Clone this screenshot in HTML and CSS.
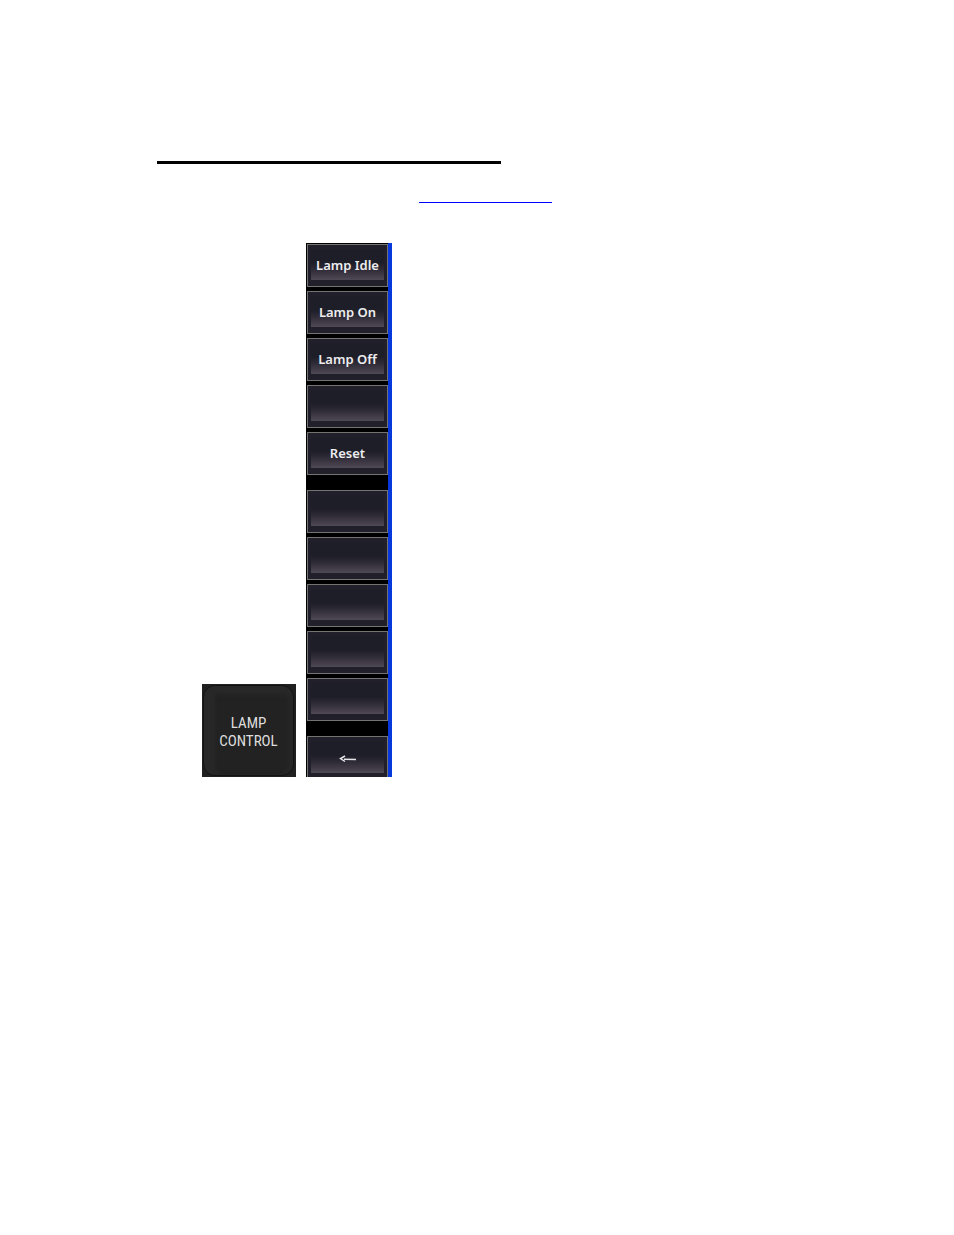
FILE: index.html
```
<!DOCTYPE html>
<html lang="en">
  <head>
    <meta charset="UTF-8" />
    <meta name="viewport" content="width=device-width, initial-scale=1.0" />
    <title>Lamp Control</title>
    <link rel="stylesheet" href="styles.css">
  </head>

  <body>
    <hr class="heading-rule" />
    <a class="section-link" href="#lamp-menu" aria-label="Lamp menu"></a>

    <main class="panel">
      <button class="hard-key"><span class="key-cap">LAMP<br />CONTROL</span></button>

      <div class="soft-keys" id="lamp-menu">
        <div class="key-group">
          <button class="soft-key"><span class="face">Lamp Idle</span></button>
          <button class="soft-key"><span class="face">Lamp On</span></button>
          <button class="soft-key"><span class="face">Lamp Off</span></button>
          <button class="soft-key" aria-label="Unused"><span class="face"></span></button>
          <button class="soft-key"><span class="face">Reset</span></button>
        </div>
        <div class="key-group">
          <button class="soft-key" aria-label="Unused"><span class="face"></span></button>
          <button class="soft-key" aria-label="Unused"><span class="face"></span></button>
          <button class="soft-key" aria-label="Unused"><span class="face"></span></button>
          <button class="soft-key" aria-label="Unused"><span class="face"></span></button>
          <button class="soft-key" aria-label="Unused"><span class="face"></span></button>
        </div>
        <button class="soft-key soft-key-back" aria-label="Back">
          <span class="face">
            <svg class="arrow" width="18" height="8" viewBox="0 0 18 8" aria-hidden="true">
              <path d="M6 1 L1.5 3.5 L6 6.5 M5 4.3 L17 4.6" />
            </svg>
          </span>
        </button>
      </div>
    </main>
  </body>
</html>
```

FILE: styles.css
```
body {
  margin: 0;
  padding: 161px 24px 24px 157px;
  background-color: #fff;
  font-family: "Noto Sans", "Open Sans", sans-serif;
}

.heading-rule {
  width: 344px;
  max-width: 100%;
  height: 3px;
  margin: 0;
  border: 0;
  background-color: #000;
}

.section-link {
  display: block;
  width: 133px;
  height: 38px;
  margin-left: 262px;
  border-bottom: 1px solid #00f;
}

.panel {
  display: flex;
  align-items: flex-end;
  gap: 10px;
  margin: 40px 0 0 45px;
}

button {
  margin: 0;
  padding: 0;
  border: 0;
  font-family: inherit;
  cursor: pointer;
}

/* Physical key */
.hard-key {
  display: flex;
  width: 94px;
  height: 93px;
  background-color: #202020;
  color: #dedede;
  font-family: "Liberation Sans Narrow", "Roboto Condensed", "DejaVu Sans Condensed", sans-serif;
  font-size: 15px;
  line-height: 18px;
}

.key-cap {
  display: flex;
  flex: 1;
  align-items: center;
  justify-content: center;
  padding-top: 2px;
  margin: 1px 2px 1px 1px;
  border: 1px solid #131313;
  border-radius: 12px;
  background-color: #222;
  box-shadow: inset 13px 0 4px -2px #282828, inset -8px 0 4px -3px #272727, inset 0 10px 6px -3px #2b2b2b;
}

/* On-screen menu */
.soft-keys {
  display: flex;
  flex-direction: column;
  gap: 15px;
  padding: 1px 0 0 1px;
  border-right: 4px solid #0638dc;
  background-color: #000;
}

.key-group {
  display: flex;
  flex-direction: column;
  gap: 4px;
}

.soft-key {
  display: flex;
  width: 81px;
  height: 43px;
  padding: 4px 3px 6px;
  border: 1px solid #747573;
  background-color: #21202a;
}

.soft-key-back {
  height: 41px;
  padding-bottom: 4px;
  border-bottom: 0;
}

.face {
  display: flex;
  flex: 1;
  align-items: center;
  justify-content: center;
  background: linear-gradient(#1e1e28 45%, #302c38 68%, #504956);
  color: #eeedef;
  font-size: 13px;
  font-weight: 600;
}

.arrow {
  margin-top: 4px;
  fill: none;
  stroke: #e6e5e8;
  stroke-width: 1.5;
}
```
